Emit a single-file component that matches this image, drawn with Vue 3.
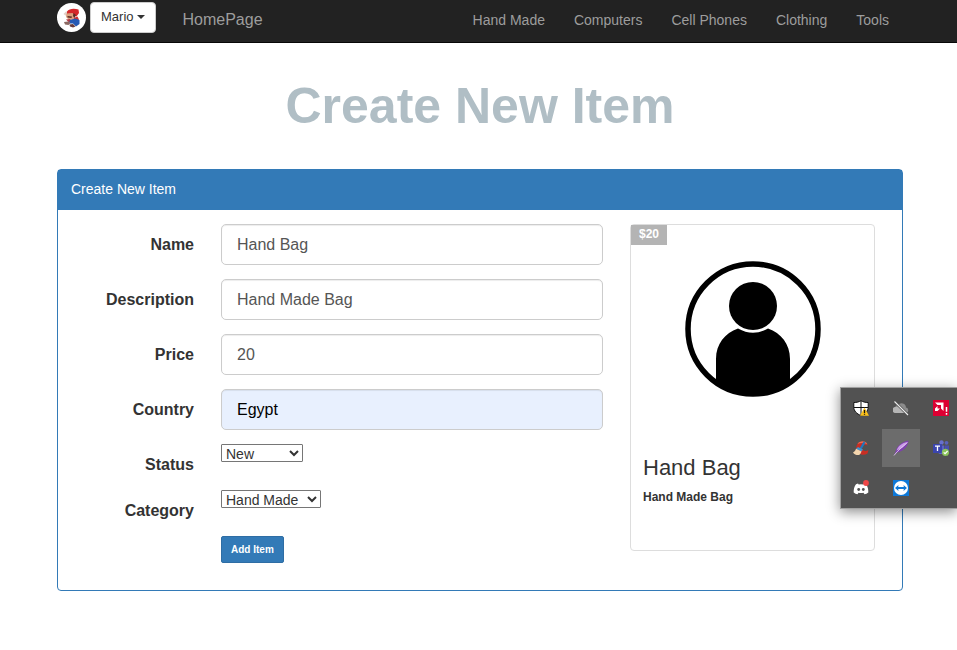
<script setup>
import { reactive } from 'vue'

const links = ['Hand Made', 'Computers', 'Cell Phones', 'Clothing', 'Tools']

const fields = [
  { key: 'name', label: 'Name' },
  { key: 'description', label: 'Description' },
  { key: 'price', label: 'Price' },
  { key: 'country', label: 'Country', filled: true },
]

const item = reactive({
  name: 'Hand Bag',
  description: 'Hand Made Bag',
  price: '20',
  country: 'Egypt',
  status: 'New',
  category: 'Hand Made',
})
</script>

<template>
  <div class="page">
    <header class="navbar">
      <svg class="avatar" viewBox="0 0 29 29" aria-hidden="true">
        <circle cx="14.5" cy="14.5" r="14.5" fill="#fff" />
        <path d="M6.500 11l2.500-2.500 3 .5 1 3-3 1.500z" fill="#e3cfc6" />
        <path d="M10 8.500C12 5.500 17 5 21.500 6.500L22 10l-2.500 3.500-5-2.500-4.500 0z" fill="#d5282b" />
        <path d="M9.500 10.500l6-.5 3 3-2.500 4-4.500-.500-2.500-2.500z" fill="#dba17f" />
        <path d="M10.500 13l4.500.5-.5 1.500-4 -.5zM16.500 10l2.500 2-1.500 3-1.500-2z" fill="#5a2d26" />
        <path d="M16.500 15l4-1.500 1.500 3-3 2z" fill="#cf3032" />
        <path d="M9 16.500l4-.5 2 2-3 1.500z" fill="#b43a42" />
        <path d="M13 17l5-1.500 4.500 1.500 0 4-3.500 2.500-3-3-4 0z" fill="#2559b4" />
        <path d="M7 19l4-.5 2.500 1.500-2 2-3.500-.5z" fill="#8b6962" />
        <path d="M12.500 21.500l3.500-.5 2.500 2.500-2.500 1-3-1z" fill="#693c3c" />
      </svg>
      <button class="user" type="button">Mario <span class="caret"></span></button>
      <a class="brand" href="#">HomePage</a>
      <nav class="links">
        <a v-for="link in links" :key="link" href="#">{{ link }}</a>
      </nav>
    </header>

    <main class="content">
      <h1>Create New Item</h1>

      <section class="panel">
        <div class="panel-heading">Create New Item</div>
        <div class="panel-body">
          <form class="form" @submit.prevent>
            <div v-for="f in fields" :key="f.key" class="row">
              <label :for="f.key">{{ f.label }}</label>
              <input :id="f.key" v-model="item[f.key]" type="text" :class="{ filled: f.filled }" />
            </div>
            <div class="row">
              <label for="status">Status</label>
              <select id="status" v-model="item.status" class="status">
                <option>New</option>
              </select>
            </div>
            <div class="row">
              <label for="category">Category</label>
              <select id="category" v-model="item.category" class="category">
                <option v-for="link in links" :key="link">{{ link }}</option>
              </select>
            </div>
            <div class="row">
              <button class="submit" type="submit">Add Item</button>
            </div>
          </form>

          <article class="card">
            <span class="price">${{ item.price }}</span>
            <svg class="person" viewBox="0 0 136 136" aria-hidden="true">
              <defs>
                <clipPath id="disc"><circle cx="68" cy="68" r="67" /></clipPath>
              </defs>
              <path
                d="M31 136V98C31 83 40 72 53 67.500Q68 76 83 67.500C96 72 105 83 105 98V136Z"
                clip-path="url(#disc)"
              />
              <circle cx="68" cy="45" r="24" />
              <circle cx="68" cy="68" r="65" fill="none" stroke="#000" stroke-width="5.500" />
            </svg>
            <div class="caption">
              <h3>{{ item.name }}</h3>
              <p>{{ item.description }}</p>
            </div>
          </article>
        </div>
      </section>
    </main>

    <aside class="tray">
      <span class="cell">
        <svg viewBox="0 0 16 16">
          <path d="M8 .7C6 2 3.500 2.500.8 2.500V7c0 4 3 7 7.200 8.500C12.200 14 15.200 11 15.200 7V2.500C12.500 2.500 10 2 8 .7z" fill="#fff" stroke="#111" />
          <path d="M8 1v14M1 7.500h14" stroke="#111" />
          <path d="M11.500 7.500L16 15.800H7z" fill="#fcc21b" />
          <path d="M11.500 10v3M11.500 13.700v1.100" stroke="#111" stroke-width="1.300" />
        </svg>
      </span>
      <span class="cell">
        <svg viewBox="0 0 16 16">
          <path d="M3 13a3 3 0 0 1-1-5.800A3 3 0 0 1 5 5a4.500 4.500 0 0 1 8 2.500A2.900 2.900 0 0 1 13.500 13z" fill="#8c8c8c" />
          <path d="M2.500 13a3 3 0 0 1 .3-6c2.500-.5 4.200.5 5.200 2l4 4z" fill="#b5b5b5" />
          <path d="M2 2l13 13" stroke="#525252" stroke-width="2.500" />
          <path d="M1.500 1.500l13.500 13.500" stroke="#eee" stroke-width="1.100" />
        </svg>
      </span>
      <span class="cell">
        <svg viewBox="0 0 16 16">
          <path d="M0 0h16v16H0z" fill="#dc0032" />
          <path d="M2 2.500h8.500V11L8 8.500V5H4.500zM4.500 6L2 8.500V11h2.500L7 8.500H4.500z" fill="#fff" />
          <path d="M13.500 7v4.800M13.500 13v1.800" stroke="#fff" stroke-width="1.500" />
        </svg>
      </span>
      <span class="cell">
        <svg viewBox="0 0 16 16">
          <path d="M14.500 5.500C13 .5 5 .5 3.500 6c-1.500 7 6 11 11 7.500L15.500 10c-2.500 1.500-6 1.500-6.500-2C8.500 5 11.500 4 14.500 5.500z" fill="#c92e24" />
          <path d="M14.500 4.500C13 .3 6.500.5 4.500 4c3-1.500 7-1.500 10 .5z" fill="#ee684d" />
          <path d="M11.500 2L7.500 9" stroke="#2178be" stroke-width="2.200" />
          <path d="M5 7l5 2.500-1.500 2-5.500-2.500z" fill="#3d94ce" />
          <path d="M3 8.800l5.500 2.700c-.5 1.500-1.500 3-2.500 3.500-2.500.3-4.500-.5-6-2.500 1.500-.7 2.500-2 3-3.700z" fill="#f4d5ad" />
        </svg>
      </span>
      <span class="cell active">
        <svg viewBox="0 0 16 16">
          <path d="M15.500.5C9 1.500 3.500 6 2.500 12L.8 15.500 4 12.500C10 11.500 15 7 15.500.5z" fill="#7e3fae" />
          <path d="M14.500 2C9 3 5 6 3.500 10.500 8 9 12 6 14.500 2z" fill="#c99be6" />
          <path d="M1 15.500C4.500 10.500 9 7.500 14.500 2.500" fill="none" stroke="#e8d7f3" stroke-width=".8" />
        </svg>
      </span>
      <span class="cell">
        <svg viewBox="0 0 16 16">
          <circle cx="8.500" cy="2.500" r="2.200" fill="#6870cd" />
          <circle cx="13.500" cy="2.800" r="1.900" fill="#5961bd" />
          <path d="M5 5.500h6v7c-1 2-5 2-6 0z" fill="#5b63c5" />
          <path d="M11.500 5.500H16V11h-4.500z" fill="#4850ad" />
          <path d="M0 4h9v9H0z" fill="#3b45ad" />
          <path d="M2 6.200h5M4.500 6v5" stroke="#fff" stroke-width="1.300" />
          <circle cx="12.500" cy="12.300" r="3.600" fill="#8bc45b" />
          <path d="M10.700 12.300l1.400 1.400 2.500-2.700" fill="none" stroke="#fff" stroke-width="1.200" />
        </svg>
      </span>
      <span class="cell">
        <svg viewBox="0 0 16 16">
          <path d="M5 3.500L3 4.300C1.300 6.500.5 9.500.7 12.500c1.200 1 2.500 1.500 3.800 1.800l1-1.600c1.500.4 3.500.4 5 0l1 1.600c1.300-.3 2.600-.8 3.800-1.800.2-3-.6-6-2.300-8.200l-2-.8-.7 1.100a11 11 0 0 0-4.600 0z" fill="#fff" />
          <circle cx="5.700" cy="9.500" r="1.400" fill="#525252" />
          <circle cx="10.300" cy="9.500" r="1.400" fill="#525252" />
          <circle cx="13" cy="3" r="2.900" fill="#f04747" />
        </svg>
      </span>
      <span class="cell">
        <svg viewBox="0 0 16 16">
          <path d="M0 0h16v16H0z" fill="#0d78d8" />
          <circle cx="8" cy="8" r="7" fill="#fff" />
          <path d="M2 8l3.500-3-.3 2h5.600l-.3-2L14 8l-3.500 3 .3-2H5.200l.3 2z" fill="#0d78d8" />
        </svg>
      </span>
    </aside>
  </div>
</template>

<style>
body {
  margin: 0;
  background: #fff;
}
</style>

<style scoped>
* {
  box-sizing: border-box;
}

.page {
  position: relative;
  font-family: "Liberation Sans", Arial, sans-serif;
  font-size: 14px;
  line-height: 20px;
  color: #333;
}

a {
  color: #9d9d9d;
  text-decoration: none;
}

.navbar {
  display: flex;
  align-items: flex-start;
  padding: 2px 68px 8px 57px;
  background: #222;
  border-bottom: 1px solid #080808;
}

.avatar {
  width: 29px;
  height: 29px;
  margin: 1px 4px 0 0;
}

.user {
  display: flex;
  align-items: center;
  gap: 3px;
  height: 31px;
  padding: 0 10px 2px;
  font: 13px "Liberation Sans", Arial, sans-serif;
  color: #333;
  background: #fff;
  border: 1px solid #ccc;
  border-radius: 4px;
}

.caret {
  border: 4px solid transparent;
  border-top-color: #333;
  border-bottom: 0;
}

.brand {
  padding: 8px 0 0 27px;
  font-size: 16px;
}

.links {
  display: flex;
  gap: 29px;
  margin-left: auto;
  padding: 8px 0 4px;
}

.content {
  padding: 0 54px 0 57px;
}

h1 {
  margin: 34px 0;
  font-size: 50px;
  line-height: 58px;
  font-weight: bold;
  text-align: center;
  color: #b0bec5;
}

.panel {
  border: 1px solid #337ab7;
  border-radius: 4px;
}

.panel-heading {
  padding: 9px 13px 11px;
  color: #fff;
  background: #337ab7;
}

.panel-body {
  display: grid;
  grid-template-columns: minmax(0, 531fr) minmax(0, 245fr);
  gap: 27px;
  padding: 14px 27px 27px 14px;
}

.form {
  display: flex;
  flex-direction: column;
  gap: 14px;
}

.row {
  display: grid;
  grid-template-columns: minmax(0, 122fr) minmax(0, 382fr);
  column-gap: 27px;
  align-items: start;
}

label {
  padding-top: 10px;
  font-size: 16px;
  line-height: 22px;
  font-weight: bold;
  text-align: right;
}

input {
  width: 100%;
  height: 41px;
  padding: 0 15px;
  font: 16px "Liberation Sans", Arial, sans-serif;
  color: #555;
  background: #fff;
  border: 1px solid #ccc;
  border-radius: 5px;
  box-shadow: inset 0 1px 1px rgba(0, 0, 0, 0.075);
}

input.filled {
  color: #000;
  background: #e8f0fe;
}

select {
  height: 18px;
  margin: 0;
  padding: 0;
  font: 14px "Liberation Sans", Arial, sans-serif;
  color: #333;
  background-color: #fff;
  border: 1px solid #767676;
  border-radius: 1px;
}

.status {
  width: 82px;
}

.category {
  width: 100px;
}

.submit {
  grid-column: 2;
  justify-self: start;
  height: 27px;
  padding: 0 9px;
  font: bold 10px "Liberation Sans", Arial, sans-serif;
  color: #fff;
  background: #337ab7;
  border: 1px solid #2e6da4;
  border-radius: 2px;
}

.card {
  position: relative;
  align-self: start;
  border: 1px solid #ddd;
  border-radius: 4px;
}

.price {
  position: absolute;
  top: 0;
  left: 0;
  padding: 0 8px 2px;
  font-size: 12px;
  line-height: 18px;
  font-weight: bold;
  color: #fff;
  background: #b4b4b4;
}

.person {
  display: block;
  width: 136px;
  height: 136px;
  margin: 36px auto 59px;
}

.caption {
  padding: 0 12px 44px;
}

h3 {
  margin: 0 0 8px;
  font-size: 22px;
  line-height: 24px;
  font-weight: normal;
}

p {
  margin: 0;
  font-size: 12px;
  line-height: 18px;
  font-weight: bold;
}

.tray {
  position: absolute;
  top: 387px;
  right: 0;
  display: grid;
  grid-template-columns: repeat(3, 38px);
  gap: 2px;
  width: 117px;
  padding: 1px;
  overflow: hidden;
  background: #525252;
  border: 1px solid #a0a0a0;
  border-right: 0;
  box-shadow: 0 3px 12px rgba(0, 0, 0, 0.45);
}

.cell {
  display: grid;
  place-items: center;
  height: 38px;
}

.cell svg {
  width: 16px;
  height: 16px;
}

.active {
  background: #6c6c6c;
}
</style>
